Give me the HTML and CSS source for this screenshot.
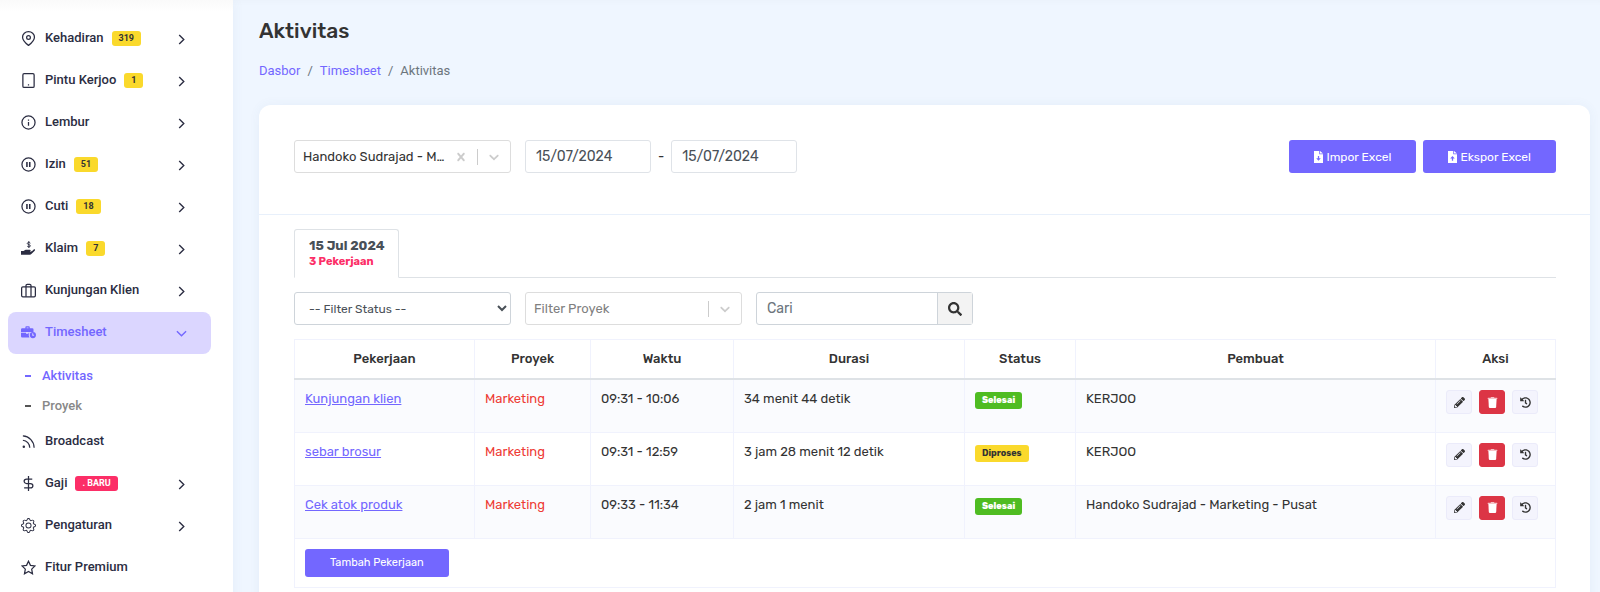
FILE: index.html
```html
<!DOCTYPE html>
<html lang="id">
<head>
    <meta charset="utf-8">
    <title>Aktivitas</title>
    <link rel="stylesheet" href="styles.css">
</head>
<body>
    <!-- shared icons -->
    <svg class="sprite" aria-hidden="true">
        <symbol id="right" viewBox="0 0 24 24"><path d="M7 2l10 10L7 22" fill="none" stroke="currentColor" stroke-width="3"/></symbol>
        <symbol id="pause" viewBox="0 0 24 24"><g fill="none" stroke="currentColor" stroke-width="2"><circle cx="12" cy="12" r="10.5"/><path d="M9.5 8v8M14 8v8" stroke-width="2.5"/></g></symbol>
        <symbol id="caret" viewBox="0 0 20 20"><path d="M4.516 7.548c0.436-0.446 1.043-0.481 1.576 0l3.908 3.747 3.908-3.747c0.533-0.481 1.141-0.446 1.574 0 0.436 0.445 0.408 1.197 0 1.615-0.406 0.418-4.695 4.502-4.695 4.502-0.217 0.223-0.502 0.335-0.787 0.335s-0.57-0.112-0.789-0.335c0 0-4.287-4.084-4.695-4.502s-0.436-1.17 0-1.615z"/></symbol>
        <symbol id="pencil" viewBox="0 0 512 512"><path d="M497.9 142.1l-46.1 46.1c-4.7 4.7-12.3 4.7-17 0l-111-111c-4.7-4.7-4.7-12.3 0-17l46.1-46.1c18.7-18.7 49.1-18.7 67.9 0l60.1 60.1c18.8 18.7 18.8 49.1 0 67.9zM284.2 99.8L21.6 362.4.4 483.9c-2.9 16.4 11.4 30.6 27.8 27.8l121.5-21.3 262.6-262.6c4.7-4.7 4.7-12.3 0-17l-111-111c-4.8-4.7-12.4-4.7-17.1 0zM124.1 339.9c-5.5-5.5-5.5-14.3 0-19.8l154-154c5.5-5.5 14.3-5.5 19.8 0s5.5 14.3 0 19.8l-154 154c-5.5 5.5-14.3 5.5-19.8 0zM88 424h48v36.3l-64.5 11.3-31.1-31.1L51.7 376H88v48z"/></symbol>
        <symbol id="trash" viewBox="0 0 448 512"><path opacity=".7" d="M432 32H312l-9.4-18.7A24 24 0 0 0 281.1 0H166.8a23.72 23.72 0 0 0-21.4 13.3L136 32H16A16 16 0 0 0 0 48v32a16 16 0 0 0 16 16h416a16 16 0 0 0 16-16V48a16 16 0 0 0-16-16z"/><path d="M53.2 467a48 48 0 0 0 47.9 45h245.8a48 48 0 0 0 47.9-45L416 96H32z"/></symbol>
        <symbol id="history" viewBox="0 0 512 512"><path d="M504 255.531c.253 136.64-111.18 248.372-247.82 248.468-59.015.042-113.223-20.53-155.822-54.911-11.077-8.94-11.905-25.541-1.839-35.607l11.267-11.267c8.609-8.609 22.353-9.551 31.891-1.984C173.062 425.135 212.781 440 256 440c101.705 0 184-82.311 184-184 0-101.705-82.311-184-184-184-48.814 0-93.149 18.969-126.068 49.932l50.754 50.754c10.08 10.08 2.941 27.314-11.313 27.314H24c-8.837 0-16-7.163-16-16V38.627c0-14.254 17.234-21.393 27.314-11.314l49.372 49.372C129.209 34.136 189.552 8 256 8c136.81 0 247.747 110.78 248 247.531zm-180.912 78.784l9.823-12.63c8.138-10.463 6.253-25.542-4.21-33.679L288 256.349V152c0-13.255-10.745-24-24-24h-16c-13.255 0-24 10.745-24 24v135.651l65.409 50.874c10.463 8.137 25.541 6.253 33.679-4.21z"/></symbol>
    </svg>
    <div class="wrapper">
        <nav class="sidebar">
            <a class="item" href="#">
                <svg class="icon line" viewBox="0 0 24 24"><path d="M12 23s-9.500-7-9.500-13a9.500 9 0 0 1 19 0c0 6-9.500 13-9.500 13z"/><circle cx="12" cy="10.500" r="3"/></svg>
                Kehadiran <span class="badge yellow">319</span><svg class="arrow"><use href="#right"/></svg>
            </a>
            <a class="item" href="#">
                <svg class="icon line" viewBox="0 0 24 24"><rect x="3" y="1" width="18" height="22" rx="2"/><path d="M12 18v2"/></svg>
                Pintu Kerjoo <span class="badge yellow">1</span><svg class="arrow"><use href="#right"/></svg>
            </a>
            <a class="item" href="#">
                <svg class="icon line" viewBox="0 0 24 24"><circle cx="12" cy="12" r="10.500"/><path d="M12 11v6M12 7v2"/></svg>
                Lembur<svg class="arrow"><use href="#right"/></svg>
            </a>
            <a class="item" href="#">
                <svg class="icon"><use href="#pause"/></svg>
                Izin <span class="badge yellow">51</span><svg class="arrow"><use href="#right"/></svg>
            </a>
            <a class="item" href="#">
                <svg class="icon"><use href="#pause"/></svg>
                Cuti <span class="badge yellow">18</span><svg class="arrow"><use href="#right"/></svg>
            </a>
            <a class="item" href="#">
                <svg class="icon" viewBox="0 0 24 24"><path d="M0 16h4c2-1.500 3-2 5-2h5c2 0 2 3 0 3h-3c4 1 6 0 9-3 1.500-1.500 3.500 0 2 1.500l-5 5c-1 1-2 1.500-3 1.500H0z"/><path d="M15 3.500c-1-1.500-5-1.500-5 .5s5 1.500 5 3.800-4 2-5 .5M12.500 0v11" fill="none" stroke="currentColor" stroke-width="1.500"/></svg>
                Klaim <span class="badge yellow">7</span><svg class="arrow"><use href="#right"/></svg>
            </a>
            <a class="item" href="#">
                <svg class="icon line" viewBox="0 0 24 24"><rect x="1" y="6" width="22" height="16" rx="2"/><path d="M8 22V4a2 2 0 0 1 2-2h4a2 2 0 0 1 2 2v18"/></svg>
                Kunjungan Klien<svg class="arrow"><use href="#right"/></svg>
            </a>
            <a class="item active" href="#">
                <svg class="icon" viewBox="0 0 24 24"><path d="M7 5V3.500A1.500 1.500 0 0 1 8.500 2h4A1.500 1.500 0 0 1 14 3.500V5h4a2 2 0 0 1 2 2v4H0V7a2 2 0 0 1 2-2zm2 0h3V4H9zM0 12.500h8V14h4v-1.500h1.500a6.500 6.500 0 0 0 0 7.500H2a2 2 0 0 1-2-2z"/><path fill-rule="evenodd" d="M19 11a5 5 0 1 1 0 10 5 5 0 0 1 0-10zm-1 2v4h3v-1.500h-1.500V13z"/></svg>
                Timesheet
                <svg class="arrow" viewBox="0 0 24 24"><path d="M2 7l10 10L22 7" fill="none" stroke="currentColor" stroke-width="3"/></svg>
            </a>
            <div class="submenu">
                <a class="current" href="#">Aktivitas</a>
                <a href="#">Proyek</a>
            </div>
            <a class="item" href="#">
                <svg class="icon line" viewBox="0 0 24 24"><path d="M3 3a19 19 0 0 1 18 19M3 10a12 12 0 0 1 11 12"/><circle cx="4.500" cy="20.500" r="1"/></svg>
                Broadcast
            </a>
            <a class="item" href="#">
                <svg class="icon line" viewBox="0 0 24 24"><path d="M12 0v24M18 5H9a4 3.500 0 0 0 0 7h6a4 3.500 0 0 1 0 7H5"/></svg>
                Gaji <span class="badge red">. BARU</span><svg class="arrow"><use href="#right"/></svg>
            </a>
            <a class="item" href="#">
                <svg class="icon" viewBox="0 0 16 16"><path d="M8 4.754a3.246 3.246 0 1 0 0 6.492 3.246 3.246 0 0 0 0-6.492zM5.754 8a2.246 2.246 0 1 1 4.492 0 2.246 2.246 0 0 1-4.492 0z"/><path d="M9.796 1.343c-.527-1.790-3.065-1.790-3.592 0l-.094.319a.873.873 0 0 1-1.255.520l-.292-.160c-1.640-.892-3.433.902-2.540 2.541l.159.292a.873.873 0 0 1-.520 1.255l-.319.094c-1.790.527-1.790 3.065 0 3.592l.319.094a.873.873 0 0 1 .520 1.255l-.160.292c-.892 1.640.901 3.434 2.541 2.540l.292-.159a.873.873 0 0 1 1.255.520l.094.319c.527 1.790 3.065 1.790 3.592 0l.094-.319a.873.873 0 0 1 1.255-.520l.292.160c1.640.893 3.434-.902 2.540-2.541l-.159-.292a.873.873 0 0 1 .520-1.255l.319-.094c1.790-.527 1.790-3.065 0-3.592l-.319-.094a.873.873 0 0 1-.520-1.255l.160-.292c.893-1.640-.902-3.433-2.541-2.540l-.292.159a.873.873 0 0 1-1.255-.520zm-2.633.283c.246-.835 1.428-.835 1.674 0l.094.319a1.873 1.873 0 0 0 2.693 1.115l.291-.160c.764-.415 1.600.420 1.184 1.185l-.159.292a1.873 1.873 0 0 0 1.116 2.692l.318.094c.835.246.835 1.428 0 1.674l-.319.094a1.873 1.873 0 0 0-1.115 2.693l.160.291c.415.764-.420 1.600-1.185 1.184l-.291-.159a1.873 1.873 0 0 0-2.693 1.116l-.094.318c-.246.835-1.428.835-1.674 0l-.094-.319a1.873 1.873 0 0 0-2.692-1.115l-.292.160c-.764.415-1.600-.420-1.184-1.185l.159-.291A1.873 1.873 0 0 0 1.945 8.930l-.319-.094c-.835-.246-.835-1.428 0-1.674l.319-.094A1.873 1.873 0 0 0 3.060 4.377l-.160-.292c-.415-.764.420-1.600 1.185-1.184l.292.159a1.873 1.873 0 0 0 2.692-1.115z"/></svg>
                Pengaturan<svg class="arrow"><use href="#right"/></svg>
            </a>
            <a class="item" href="#">
                <svg class="icon line" viewBox="0 0 24 24"><path d="M12 2l3.100 6.600 7.200 1-5.200 5 1.300 7.400-6.400-3.500L5.600 22l1.300-7.400-5.200-5 7.200-1z"/></svg>
                Fitur Premium
            </a>
        </nav>
        <main class="content">
            <h1>Aktivitas</h1>
            <div class="breadcrumb">
                <a href="#">Dasbor</a><span>/</span><a href="#">Timesheet</a><span>/</span><span>Aktivitas</span>
            </div>
            <section class="card">
                <div class="card-header">
                    <div class="picker">
                        <select aria-label="Karyawan">
                            <option>Handoko Sudrajad - Marketing - Pusat</option>
                        </select>
                        <button class="clear" aria-label="Hapus"><svg viewBox="0 0 20 20"><path d="M14.348 14.849c-0.469 0.469-1.229 0.469-1.697 0l-2.651-3.030-2.651 3.029c-0.469 0.469-1.229 0.469-1.697 0-0.469-0.469-0.469-1.229 0-1.697l2.758-3.150-2.759-3.152c-0.469-0.469-0.469-1.228 0-1.697s1.228-0.469 1.697 0l2.652 3.031 2.651-3.031c0.469-0.469 1.228-0.469 1.697 0s0.469 1.229 0 1.697l-2.758 3.152 2.758 3.150c0.469 0.469 0.469 1.229 0 1.698z"/></svg></button>
                        <span class="caret"><svg><use href="#caret"/></svg></span>
                    </div>
                    <div class="dates">
                        <input type="text" value="15/07/2024" aria-label="Tanggal mulai">
                        <span>-</span>
                        <input type="text" value="15/07/2024" aria-label="Tanggal selesai">
                    </div>
                    <div class="buttons">
                        <button class="btn"><svg viewBox="0 0 384 512"><path fill-rule="evenodd" d="M0 0h224v136h160v376H0zM256 0l128 104H256zM165 210v100H95l97 110 97-110h-70V210z"/></svg>Impor Excel</button>
                        <button class="btn"><svg viewBox="0 0 384 512"><path fill-rule="evenodd" d="M0 0h224v136h160v376H0zM256 0l128 104H256zM165 420V320H95l97-110 97 110h-70v100z"/></svg>Ekspor Excel</button>
                    </div>
                </div>
                <div class="card-body">
                    <div class="tabs">
                        <a class="tab" href="#">15 Jul 2024<small>3 Pekerjaan</small></a>
                    </div>
                    <div class="filters">
                        <select class="status" aria-label="Filter Status">
                            <option>-- Filter Status --</option>
                        </select>
                        <div class="picker empty">
                            <select aria-label="Filter Proyek">
                                <option>Filter Proyek</option>
                            </select>
                            <span class="caret"><svg><use href="#caret"/></svg></span>
                        </div>
                        <div class="search">
                            <input type="text" placeholder="Cari" aria-label="Cari">
                            <button aria-label="Cari"><svg viewBox="0 0 512 512"><path d="M505 442.700L405.300 343c-4.500-4.500-10.600-7-17-7H372c27.600-35.300 44-79.700 44-128C416 93.100 322.900 0 208 0S0 93.100 0 208s93.100 208 208 208c48.300 0 92.700-16.400 128-44v16.300c0 6.400 2.500 12.500 7 17l99.700 99.700c9.400 9.400 24.600 9.400 33.900 0l28.300-28.300c9.400-9.400 9.400-24.600.1-34zM208 336c-70.700 0-128-57.200-128-128 0-70.700 57.200-128 128-128 70.700 0 128 57.200 128 128 0 70.700-57.200 128-128 128z"/></svg></button>
                        </div>
                    </div>
                    <table>
                        <colgroup>
                            <col class="c-job"><col class="c-project"><col class="c-time"><col class="c-duration"><col class="c-status"><col><col class="c-action">
                        </colgroup>
                        <thead>
                            <tr><th>Pekerjaan</th><th>Proyek</th><th>Waktu</th><th>Durasi</th><th>Status</th><th>Pembuat</th><th>Aksi</th></tr>
                        </thead>
                        <tbody>
                            <tr>
                                <td><a href="#">Kunjungan klien</a></td>
                                <td class="project">Marketing</td>
                                <td>09:31 - 10:06</td>
                                <td>34 menit 44 detik</td>
                                <td><span class="label green">Selesai</span></td>
                                <td>KERJOO</td>
                                <td>
                                    <div class="actions">
                                        <button aria-label="Ubah"><svg><use href="#pencil"/></svg></button>
                                        <button class="delete" aria-label="Hapus"><svg><use href="#trash"/></svg></button>
                                        <button aria-label="Riwayat"><svg><use href="#history"/></svg></button>
                                    </div>
                                </td>
                            </tr>
                            <tr>
                                <td><a href="#">sebar brosur</a></td>
                                <td class="project">Marketing</td>
                                <td>09:31 - 12:59</td>
                                <td>3 jam 28 menit 12 detik</td>
                                <td><span class="label yellow">Diproses</span></td>
                                <td>KERJOO</td>
                                <td>
                                    <div class="actions">
                                        <button aria-label="Ubah"><svg><use href="#pencil"/></svg></button>
                                        <button class="delete" aria-label="Hapus"><svg><use href="#trash"/></svg></button>
                                        <button aria-label="Riwayat"><svg><use href="#history"/></svg></button>
                                    </div>
                                </td>
                            </tr>
                            <tr>
                                <td><a href="#">Cek atok produk</a></td>
                                <td class="project">Marketing</td>
                                <td>09:33 - 11:34</td>
                                <td>2 jam 1 menit</td>
                                <td><span class="label green">Selesai</span></td>
                                <td>Handoko Sudrajad - Marketing - Pusat</td>
                                <td>
                                    <div class="actions">
                                        <button aria-label="Ubah"><svg><use href="#pencil"/></svg></button>
                                        <button class="delete" aria-label="Hapus"><svg><use href="#trash"/></svg></button>
                                        <button aria-label="Riwayat"><svg><use href="#history"/></svg></button>
                                    </div>
                                </td>
                            </tr>
                        </tbody>
                        <tfoot>
                            <tr><td colspan="7"><button class="btn small">Tambah Pekerjaan</button></td></tr>
                        </tfoot>
                    </table>
                </div>
            </section>
        </main>
    </div>
</body>
</html>
```

FILE: styles.css
```css
* {
    box-sizing: border-box;
}
body {
    margin: 0;
    background: #eff6ff;
    color: #333;
    font: 13px/20px Rubik, Inter, sans-serif;
}
a {
    color: #7367ff;
    text-decoration: none;
}
svg {
    fill: currentColor;
    flex: none;
}
button, input, select {
    font: inherit;
    color: inherit;
}
button {
    padding: 0;
    cursor: pointer;
}
.sprite {
    display: none;
}
.wrapper {
    display: flex;
    min-height: 100vh;
    box-shadow: inset 0 8px 8px -8px rgba(0, 0, 0, 0.03);
}

/* sidebar */
.sidebar {
    width: 233px;
    flex: none;
    padding: 18px 22px 0 8px;
    background: linear-gradient(#fafafa, #fff 12px);
    box-shadow: 0 0 12px rgba(60, 100, 160, 0.06);
    font: 500 13px/20px Roboto, sans-serif;
}
.item {
    display: flex;
    align-items: center;
    height: 42px;
    padding: 0 24px 2px 13px;
    color: #2b2d42;
    border-radius: 8px;
}
.icon {
    width: 15px;
    height: 15px;
    margin-right: 9px;
}
.line {
    fill: none;
    stroke: currentColor;
    stroke-width: 2;
}
.arrow {
    width: 11px;
    height: 11px;
    margin: 3px 0 0 auto;
}
.active {
    background: #dbd6ff;
    color: #7367ff;
}
.badge {
    margin-left: 8px;
    padding: 0 7px;
    border-radius: 3px;
    font-size: 9px;
    font-weight: 700;
    line-height: 15px;
}
.yellow {
    background: #fad92c;
    color: #333;
}
.red {
    background: #fc2e67;
    color: #fff;
}
.green {
    background: #4fbc22;
    color: #fff;
}
.submenu {
    padding-top: 7px;
}
.submenu a {
    display: flex;
    align-items: center;
    height: 30px;
    padding-left: 17px;
    color: #888;
}
.submenu a::before {
    content: "";
    width: 6px;
    height: 2px;
    margin-right: 11px;
    background: #555;
}
.submenu a.current {
    color: #7367ff;
}
.submenu a.current::before {
    background: #7367ff;
}

/* content */
.content {
    flex: 1;
    min-width: 0;
    padding: 18px 10px 0 26px;
}
h1 {
    margin: 0;
    font-size: 21px;
    line-height: 26px;
    font-weight: 500;
}
.breadcrumb {
    display: flex;
    gap: 7px;
    margin: 17px 0 24px;
    color: #6c757d;
    font-family: Roboto, sans-serif;
}
.card {
    background: #fff;
    border-radius: 12px;
    box-shadow: 0 0 12px rgba(60, 100, 160, 0.06);
}
.card-header {
    display: flex;
    gap: 14px;
    height: 110px;
    padding: 35px 34px 0 35px;
    border-bottom: 1px solid #e8f0fb;
}
.picker {
    display: flex;
    align-items: center;
    width: 217px;
    height: 33px;
    border: 1px solid #ddd;
    border-radius: 3px;
    color: #ccc;
}
.picker select {
    flex: 1;
    min-width: 0;
    padding: 0 8px;
    border: 0;
    appearance: none;
    background: none;
    color: #333;
    text-overflow: ellipsis;
    overflow: hidden;
}
.picker.empty select {
    color: #808080;
}
.picker svg {
    width: 16px;
    height: 16px;
    display: block;
}
.clear {
    margin: 0 8px 0 0;
    border: 0;
    background: none;
    color: #ccc;
}
.caret {
    padding: 0 8px;
    border-left: 1px solid #ccc;
}
.dates {
    display: flex;
    align-items: flex-start;
    line-height: 33px;
    gap: 7px;
}
.dates input {
    width: 126px;
    height: 33px;
    padding: 0 10px;
    border: 1px solid #dfe3e8;
    border-radius: 3px;
    color: #495057;
    font-size: 14px;
}
.buttons {
    display: flex;
    align-items: flex-start;
    gap: 7px;
    margin-left: auto;
}
.btn {
    display: flex;
    align-items: center;
    gap: 3px;
    height: 33px;
    padding: 0 25px;
    border: 0;
    border-radius: 3px;
    background: #7367ff;
    color: #fff;
    font: 12px/16px Rubik, Roboto, sans-serif;
}
.btn svg {
    width: 9px;
    height: 12px;
}
.small {
    height: 28px;
    font-size: 11px;
}
.card-body {
    padding: 14px 34px 35px 35px;
}
.tabs {
    display: flex;
    border-bottom: 1px solid #dee2e6;
}
.tab {
    margin-bottom: -1px;
    padding: 7px 13px 7px 14px;
    border: 1px solid #dee2e6;
    border-bottom-color: #fff;
    border-radius: 3px 3px 0 0;
    background: #fff;
    color: #495057;
    font-weight: 700;
    line-height: 17px;
}
.tab small {
    display: block;
    color: #fc2e67;
    font-size: 11px;
    line-height: 16px;
}
.filters {
    display: flex;
    gap: 14px;
    margin: 14px 0;
}
.status {
    width: 217px;
    height: 33px;
    padding: 0 10px;
    border: 1px solid #ced4da;
    border-radius: 3px;
    background: #fff;
    color: #495057;
    font-size: 12px;
}
.search {
    display: flex;
    width: 217px;
    height: 33px;
    border: 1px solid #ced4da;
    border-radius: 3px;
}
.search input {
    flex: 1;
    min-width: 0;
    padding: 0 10px;
    border: 0;
    background: none;
    font-size: 14px;
}
.search input::placeholder {
    color: #6c757d;
}
.search button {
    width: 35px;
    border: 0;
    border-left: 1px solid #ced4da;
    background: #f3f3f3;
}
.search svg {
    display: block;
    width: 14px;
    height: 14px;
    margin: auto;
}

/* table */
table {
    width: 100%;
    border-collapse: collapse;
    table-layout: fixed;
}
.c-job {
    width: 180px;
}
.c-project {
    width: 116px;
}
.c-time {
    width: 143px;
}
.c-duration {
    width: 231px;
}
.c-status {
    width: 111px;
}
.c-action {
    width: 120px;
}
th, td {
    padding: 10px;
    border: 1px solid #f0f2fd;
    text-align: left;
    vertical-align: top;
}
th {
    padding: 9px 10px;
    border-bottom: 2px solid #dee2e6;
    font-weight: 500;
    text-align: center;
}
tbody td {
    height: 53px;
    padding-top: 9px;
}
tbody tr:nth-child(odd) {
    background: #fafbfe;
}
td a {
    text-decoration: underline;
}
.project {
    color: #ee3b35;
}
.label {
    display: inline-block;
    margin-top: 3px;
    padding: 0 7px;
    border-radius: 3px;
    font-size: 9px;
    font-weight: 800;
    line-height: 17px;
}
.label.yellow {
    font-weight: 700;
}
.actions {
    display: flex;
    gap: 7px;
    padding-top: 1px;
}
.actions button {
    width: 26px;
    height: 24px;
    border: 1px solid #ebebfa;
    border-radius: 3px;
    background: #f4f4fd;
}
.actions svg {
    display: block;
    width: 11px;
    height: 11px;
    margin: auto;
}
.actions .delete {
    border-color: #dc3545;
    background: #dc3545;
    color: #fff;
}
```
